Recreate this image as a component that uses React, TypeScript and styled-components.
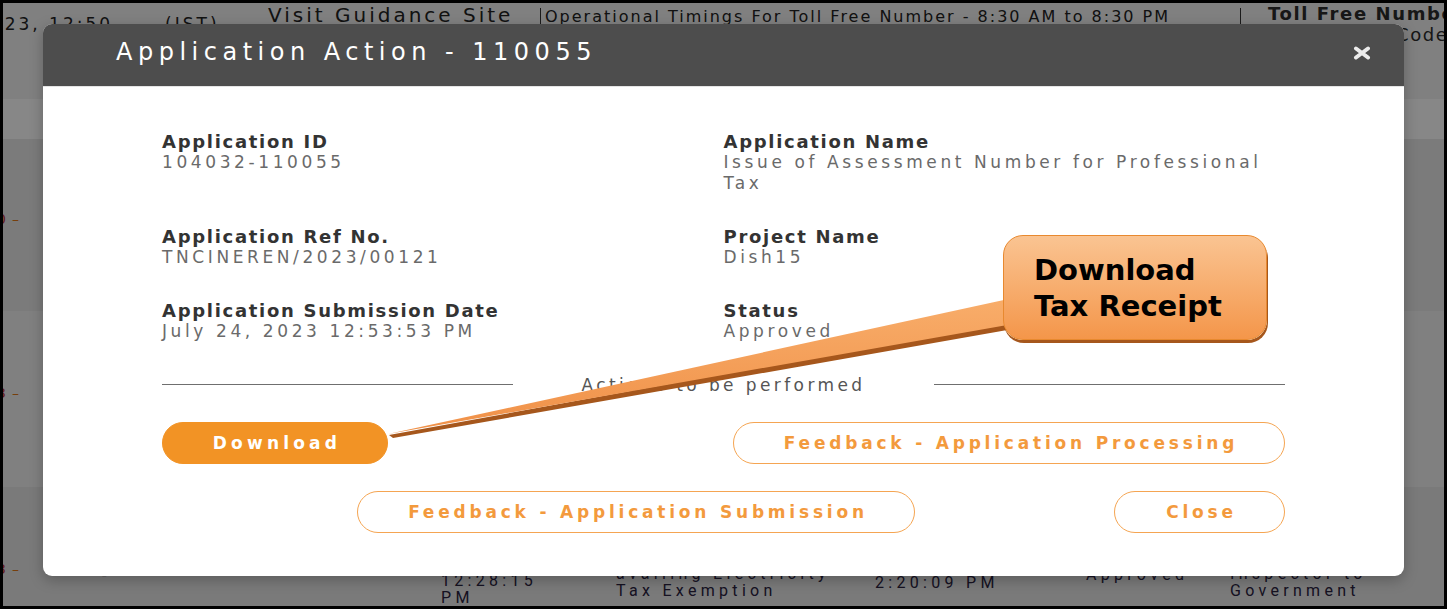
import React from "react";
import styled, { createGlobalStyle } from "styled-components";

const GlobalStyle = createGlobalStyle`
  html, body {
    margin: 0;
    padding: 0;
    background: #fff;
  }
  body {
    width: 1456px;
    height: 609px;
    overflow: hidden;
    font-family: "DejaVu Sans", "Liberation Sans", sans-serif;
  }
`;

const Screen = styled.div`
  position: relative;
  width: 1447px;
  height: 609px;
  border: 3px solid #000;
  box-sizing: border-box;
  overflow: hidden;
  background: #f2f2f2;
`;

/* ---------- dimmed page behind the dialog ---------- */

const Page = styled.div`
  display: flex;
  flex-direction: column;
  height: 100%;
  color: #222;
  white-space: nowrap;
`;

const TopBar = styled.div`
  display: flex;
  align-items: flex-start;
  height: 97px;
  background: #f2f2f2;
  overflow: hidden;
`;

const Stamp = styled.div`
  flex: 0 0 auto;
  width: 291px;
  margin-left: -26px;
  padding-top: 11px;
  font-size: 17px;
  line-height: 20px;
  letter-spacing: 3px;
`;

const StampZone = styled.span`
  margin-left: 52px;
`;

const GuideLink = styled.div`
  flex: 0 0 auto;
  width: 272px;
  font-size: 20px;
  line-height: 24px;
  letter-spacing: 3px;
`;

const Bar = styled.div`
  flex: 0 0 auto;
  width: 1px;
  height: 19px;
  margin-top: 5px;
  background: #333;
`;

const Timings = styled.div`
  flex: 0 0 auto;
  width: 695px;
  padding: 4px 0 0 4px;
  font-size: 16px;
  line-height: 20px;
  letter-spacing: 2px;
`;

const TollFree = styled.div`
  flex: 0 0 auto;
  padding-left: 27px;
  font-size: 18px;
  font-weight: 700;
  line-height: 21px;
  letter-spacing: 1.6px;
  color: #2c2c2c;
`;

const TollFreeCode = styled.div`
  padding-left: 128px;
  font-weight: 400;
`;

const Stripe = styled.div<{ $tone: string; $height?: number }>`
  display: flex;
  align-items: flex-start;
  background: ${(p) => p.$tone};
  ${(p) => (p.$height ? `height: ${p.$height}px;` : "flex: 1;")}
`;

const RowMark = styled.div<{ $offset: number }>`
  flex: 0 0 105px;
  margin-top: ${(p) => p.$offset}px;
  margin-left: -6px;
  font-size: 14px;
  line-height: 16px;
`;

const MarkDigit = styled.span`
  color: #b8323a;
  margin-right: 6px;
`;

const MarkDash = styled.span`
  color: #e07818;
`;

const Cell = styled.div<{ $width?: number; $offset: number }>`
  ${(p) => (p.$width ? `flex: 0 0 ${p.$width}px;` : "flex: 1;")}
  margin-top: ${(p) => p.$offset}px;
  font-family: Roboto, "Liberation Sans", sans-serif;
  font-size: 16px;
  line-height: 17px;
  letter-spacing: 4.3px;
  color: #2a2240;
`;

const Backdrop = styled.div`
  position: absolute;
  inset: 0;
  background: rgba(0, 0, 0, 0.47);
`;

/* ---------- dialog ---------- */

const Modal = styled.div`
  position: absolute;
  left: 40px;
  top: 21px;
  width: 1361px;
  background: #fff;
  border-radius: 9px;
  overflow: hidden;
  box-shadow: 0 4px 14px rgba(0, 0, 0, 0.25);
`;

const Header = styled.div`
  display: flex;
  align-items: center;
  justify-content: space-between;
  height: 63px;
  padding: 0 33px 6px 73px;
  box-sizing: border-box;
  background: #4d4d4d;
  border-bottom: 1px solid #e4e4e4;
`;

const Title = styled.h4`
  margin: 0;
  color: #fff;
  font-size: 24px;
  font-weight: 400;
  letter-spacing: 5.5px;
`;

const CloseIcon = styled.svg`
  display: block;
  margin-top: 1px;
`;

const Body = styled.div`
  padding: 44px 119px 43px;
`;

const Details = styled.div`
  display: grid;
  grid-template-columns: 1fr 1fr;
`;

const Field = styled.div`
  margin-bottom: 32px;
  line-height: 21px;
`;

const Label = styled.div`
  font-size: 18px;
  font-weight: 700;
  letter-spacing: 1.7px;
  color: #333;
`;

const Value = styled.div`
  font-size: 17px;
  letter-spacing: 3.6px;
  color: #6a6a6a;
`;

const Divider = styled.div`
  display: flex;
  align-items: center;
  height: 21px;
`;

const Rule = styled.div`
  flex: 1;
  height: 1px;
  background: #6f6f6f;
`;

const DividerText = styled.span`
  margin: 0 69px;
  font-size: 17px;
  letter-spacing: 3.4px;
  color: #555;
`;

const ButtonRow = styled.div<{ $justify: string }>`
  display: flex;
  justify-content: ${(p) => p.$justify};
  gap: 199px;
  margin-top: 27px;
`;

const PillButton = styled.button<{ $filled?: boolean; $width: number }>`
  width: ${(p) => p.$width}px;
  height: 42px;
  padding: 0 0 0 4px;
  border-radius: 21px;
  border: 1px solid ${(p) => (p.$filled ? "#f29325" : "#f5a552")};
  background: ${(p) => (p.$filled ? "#f29325" : "#fff")};
  color: ${(p) => (p.$filled ? "#fff" : "#f39a3d")};
  font-family: "DejaVu Sans", sans-serif;
  font-size: 17px;
  font-weight: 700;
  letter-spacing: ${(p) => (p.$filled ? 4.2 : 3.8)}px;
  cursor: pointer;
`;

/* ---------- callout ---------- */

const Callout = styled.div`
  position: absolute;
  left: 382px;
  top: 229px;
  width: 885px;
  height: 212px;
  pointer-events: none;
`;

const Pointer = styled.svg`
  position: absolute;
  left: 0;
  top: 0;
`;

const Bubble = styled.div`
  position: absolute;
  left: 618px;
  top: 3px;
  width: 264px;
  height: 105px;
  box-sizing: border-box;
  padding: 16px 0 0 30px;
  border: 1.5px solid #e8892f;
  border-radius: 20px;
  background: linear-gradient(#fac492, #f4964a);
  box-shadow: 1px 3px 0 #a6571c;
  font-family: "DejaVu Sans", Verdana, sans-serif;
  font-size: 29px;
  font-weight: 700;
  line-height: 36px;
  color: #000;
  white-space: nowrap;
`;

const fields = [
  { label: "Application ID", value: "104032-110055" },
  { label: "Application Name", value: "Issue of Assessment Number for Professional Tax" },
  { label: "Application Ref No.", value: "TNCINEREN/2023/00121" },
  { label: "Project Name", value: "Dish15" },
  { label: "Application Submission Date", value: "July 24, 2023 12:53:53 PM" },
  { label: "Status", value: "Approved" },
];

const lastRow = [
  { width: 339, offset: 80, lines: ["-"] },
  { width: 175, offset: 68, lines: ["24/07/2023", "12:28:15", "PM"] },
  { width: 259, offset: 61, lines: ["Application for", "availing Electricity", "Tax Exemption"] },
  { width: 211, offset: 70, lines: ["24/07/2023", "2:20:09 PM"] },
  { width: 144, offset: 79, lines: ["Approved"] },
  { offset: 61, lines: ["Submitted by", "Inspector to", "Government"] },
];

export default function App() {
  return (
    <>
      <GlobalStyle />
      <Screen>
        <Page>
          <TopBar>
            <Stamp>
              2023, 12:50<StampZone>(IST)</StampZone>
            </Stamp>
            <GuideLink>Visit Guidance Site</GuideLink>
            <Bar />
            <Timings>Operational Timings For Toll Free Number - 8:30 AM to 8:30 PM</Timings>
            <Bar />
            <TollFree>
              Toll Free Number
              <TollFreeCode>Code</TollFreeCode>
            </TollFree>
          </TopBar>
          <Stripe $tone="#ffffff" $height={40} />
          <Stripe $tone="#e8e8e8" $height={173}>
            <RowMark $offset={72}>
              <MarkDigit>0</MarkDigit>
              <MarkDash>–</MarkDash>
            </RowMark>
          </Stripe>
          <Stripe $tone="#f2f2f2" $height={177}>
            <RowMark $offset={74}>
              <MarkDigit>3</MarkDigit>
              <MarkDash>–</MarkDash>
            </RowMark>
          </Stripe>
          <Stripe $tone="#e6e6e6">
            <RowMark $offset={74}>
              <MarkDigit>3</MarkDigit>
              <MarkDash>–</MarkDash>
            </RowMark>
            {lastRow.map((cell, i) => (
              <Cell key={i} $width={cell.width} $offset={cell.offset}>
                {cell.lines.map((line) => (
                  <div key={line}>{line}</div>
                ))}
              </Cell>
            ))}
          </Stripe>
        </Page>

        <Backdrop />

        <Modal>
          <Header>
            <Title>Application Action - 110055</Title>
            <CloseIcon width="18" height="14" viewBox="0 0 18 14">
              <path
                d="M3 2.5 L15 11.5 M15 2.5 L3 11.5"
                stroke="#ececec"
                strokeWidth="4"
                strokeLinecap="round"
              />
            </CloseIcon>
          </Header>
          <Body>
            <Details>
              {fields.map((f) => (
                <Field key={f.label}>
                  <Label>{f.label}</Label>
                  <Value>{f.value}</Value>
                </Field>
              ))}
            </Details>
            <Divider>
              <Rule />
              <DividerText>Actions to be performed</DividerText>
              <Rule />
            </Divider>
            <ButtonRow $justify="space-between">
              <PillButton $filled $width={226}>
                Download
              </PillButton>
              <PillButton $width={552}>Feedback - Application Processing</PillButton>
            </ButtonRow>
            <ButtonRow $justify="flex-end">
              <PillButton $width={558}>Feedback - Application Submission</PillButton>
              <PillButton $width={171}>Close</PillButton>
            </ButtonRow>
          </Body>
        </Modal>

        <Callout>
          <Pointer width="885" height="212" viewBox="0 0 885 212">
            <defs>
              <linearGradient id="wedge" x1="0" y1="0" x2="0" y2="1">
                <stop offset="0" stopColor="#f8ad6a" />
                <stop offset="1" stopColor="#f09047" />
              </linearGradient>
            </defs>
            <polygon points="628,89 4,203 8,206 628,97" fill="#a6571c" />
            <polygon points="628,66 3,202 628,92" fill="url(#wedge)" />
          </Pointer>
          <Bubble>
            Download
            <br />
            Tax Receipt
          </Bubble>
        </Callout>
      </Screen>
    </>
  );
}
